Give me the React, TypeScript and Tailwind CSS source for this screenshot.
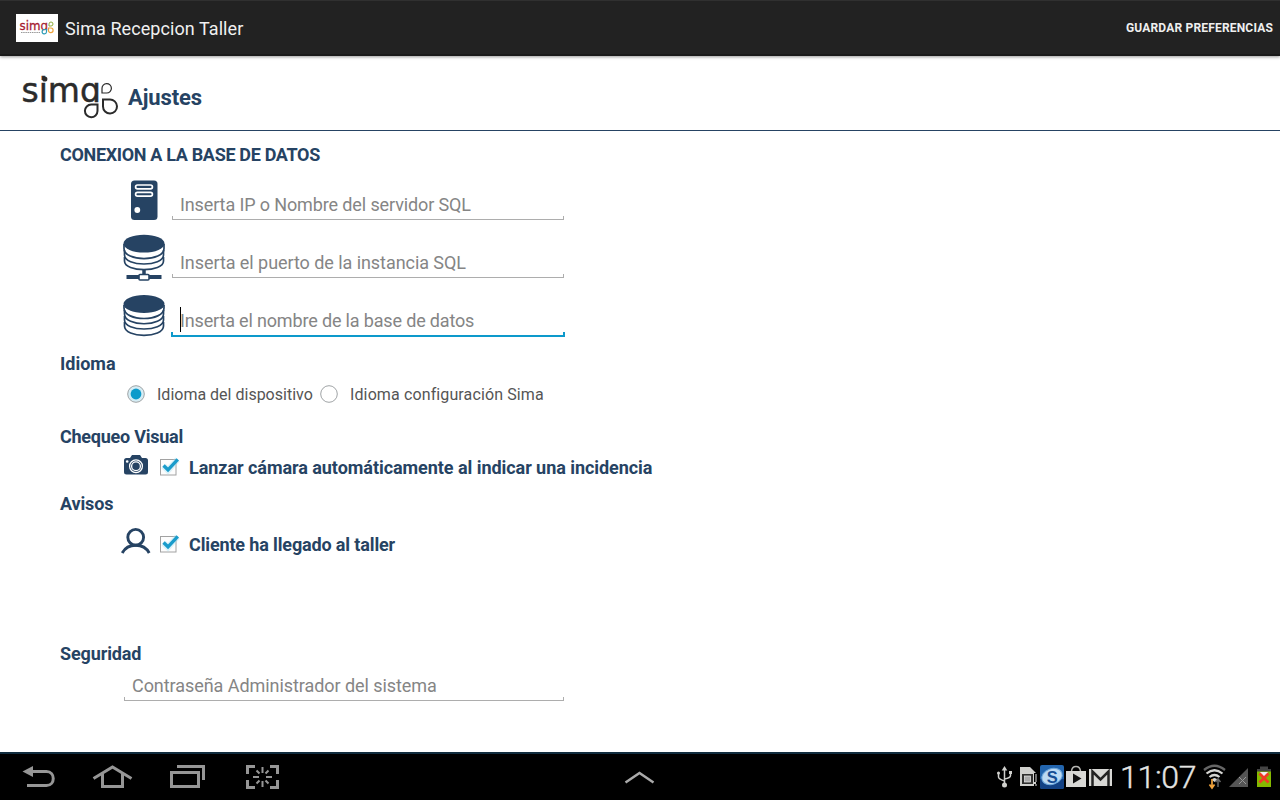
import React from "react";

type GlyphProps = {
  box: string;
  className: string;
  children: React.ReactNode;
};

function Glyph({ box, className, children }: GlyphProps) {
  return (
    <svg viewBox={box} className={`block shrink-0 ${className}`} fill="none">
      {children}
    </svg>
  );
}

const NAVY = "#264363";

function SimaLogo() {
  return (
    <Glyph box="20 64 100 55" className="h-[55px] w-[100px]">
      <text x="21.500" y="101.300" fontSize="34.500" textLength="79.500" lengthAdjust="spacingAndGlyphs" fill="#2b2b2b" stroke="#2b2b2b" strokeWidth=".5" className="font-['DejaVu_Sans']">
        simɑ
      </text>
      <circle cx="44.800" cy="78" r="2.600" fill="#2b2b2b" />
      <g stroke="#2b2b2b">
        <path d="M102 92V87.500A4.700 4.700 0 1 1 106.700 92Z" strokeWidth="1.200" />
        <path d="M103 98.500H109.700A7 7 0 1 1 103 105.500Z" strokeWidth="2" />
        <path d="M97.500 103.600V110A6.300 6.300 0 1 1 91.200 103.600Z" strokeWidth="2" />
      </g>
    </Glyph>
  );
}

function AppIcon() {
  return (
    <Glyph box="0 0 42 28" className="h-7 w-[42px] bg-white">
      <text x="3.500" y="15.500" fontSize="13" textLength="28.500" lengthAdjust="spacingAndGlyphs" fill="#a51c30" stroke="#a51c30" strokeWidth=".3" className="font-['DejaVu_Sans']">
        simɑ
      </text>
      <path d="M5 18.500H24" stroke="#999" strokeWidth="1.200" strokeDasharray="1.500 .7" />
      <path d="M33 12V10A2 2 0 1 1 35 12Z" stroke="#8fae3c" />
      <path d="M32.500 14H35A2.300 2.300 0 1 1 32.500 16.500Z" stroke="#eda23b" strokeWidth="1.200" />
      <path d="M30.500 15.500V18A2.200 2.200 0 1 1 28.300 15.500Z" stroke="#2c9bb5" strokeWidth="1.200" />
    </Glyph>
  );
}

function ServerIcon() {
  return (
    <Glyph box="122 178 44 42" className="h-[42px] w-11">
      <rect x="131" y="180.500" width="26.500" height="39.500" rx="3.500" fill={NAVY} />
      <rect x="135.600" y="185" width="16.800" height="3.800" rx="1.900" stroke="#fff" strokeWidth="1.700" />
      <rect x="135.600" y="192.300" width="16.800" height="3.800" rx="1.900" stroke="#fff" strokeWidth="1.700" />
      <circle cx="137.300" cy="210" r="2.900" fill="#fff" />
    </Glyph>
  );
}

function NetworkDatabaseIcon() {
  return (
    <Glyph box="122 233 44 49" className="-mb-1 h-[49px] w-11">
      <g stroke={NAVY} strokeWidth="1.700">
        <path d="M124 244V248.500C124 262 164 262 164 248.500V244" />
        <path d="M124.500 250V255C124.500 267 163.500 267 163.500 255V250" />
        <path d="M124.500 257V261C124.500 272.500 163.500 272.500 163.500 261V257" />
      </g>
      <ellipse cx="144" cy="243.600" rx="20.500" ry="8.900" fill={NAVY} />
      <path d="M144 269V275" stroke={NAVY} strokeWidth="3.500" />
      <path d="M126.500 277H161.500" stroke={NAVY} strokeWidth="3.800" />
      <rect x="139" y="274.500" width="10" height="5.500" rx="1" fill="#fff" stroke={NAVY} strokeWidth="1.600" />
    </Glyph>
  );
}

function DatabaseIcon() {
  return (
    <Glyph box="122 293 44 44" className="h-11 w-11">
      <g stroke={NAVY} strokeWidth="1.700">
        <path d="M124 305V308C124 322 164 322 164 308V305" />
        <path d="M124.500 310V314C124.500 327 163.500 327 163.500 314V310" />
        <path d="M124.500 316V320C124.500 332 163.500 332 163.500 320V316" />
        <path d="M124.500 322V326C124.500 338.500 163.500 338.500 163.500 326V322" />
      </g>
      <ellipse cx="144" cy="304" rx="20.500" ry="8.900" fill={NAVY} />
    </Glyph>
  );
}

function CameraIcon() {
  return (
    <Glyph box="123 454.500 26 24" className="h-6 w-[26px]">
      <path d="M126.500 457.500H130L132 454.500H140L142 457.500H145.500Q148 457.500 148 460V471.500Q148 474 145.500 474H126.500Q124 474 124 471.500V460Q124 457.500 126.500 457.500Z" fill={NAVY} />
      <circle cx="136" cy="465.700" r="6.400" stroke="#fff" strokeWidth="1.300" />
      <circle cx="136" cy="465.700" r="4.400" fill={NAVY} stroke="#fff" strokeWidth="1.300" />
      <circle cx="127.200" cy="461" r="1.300" fill="#fff" />
    </Glyph>
  );
}

function PersonIcon() {
  return (
    <Glyph box="120 527 32 28" className="h-7 w-8">
      <circle cx="135.700" cy="537.300" r="7.900" stroke={NAVY} strokeWidth="2.900" />
      <path d="M122.200 553C125 548 129.500 545.300 135.700 545.300S146.500 548 149.200 553" stroke={NAVY} strokeWidth="2.900" />
    </Glyph>
  );
}

function CheckMark() {
  return (
    <Glyph box="158 456 24 22" className="h-[22px] w-6">
      <rect x="160.500" y="459.500" width="15.500" height="15.500" fill="#fdfdfd" stroke="#a2a2a2" />
      <path d="M163.500 466L168 470.300L177.500 459.500" stroke="#a8e1f3" strokeOpacity=".4" strokeWidth="6" />
      <path d="M163.500 465.500L168 469.800L177.800 459.300" stroke="#1a9ccb" strokeWidth="3.300" />
    </Glyph>
  );
}

function Radio({ selected = false }: { selected?: boolean }) {
  return (
    <Glyph box="0 0 20 20" className="h-5 w-5">
      <circle cx="10" cy="10" r="8.300" fill={selected ? "#d5edf5" : "#fff"} stroke="#a0a4a6" strokeWidth="1" />
      {selected && <circle cx="10" cy="10" r="5.400" fill="#0d9bcb" />}
    </Glyph>
  );
}

type FieldProps = { label: string; className: string; focused?: boolean };

function Field({ label, className, focused = false }: FieldProps) {
  return (
    <div
      className={`relative flex items-center text-[18px] text-[#858585] ${className} ${focused ? "border-b-2 border-[#0d99cb] pt-0.5 pl-[9px]" : "border-b border-[#adadad] pl-2"}`}
    >
      {focused && <span className="absolute top-[3px] left-[9px] h-[25px] w-px bg-black" />}
      <span className="whitespace-nowrap">{label}</span>
      <span className={`absolute bottom-0 left-0 ${focused ? "h-[3px] w-0.5 bg-[#0d99cb]" : "h-[3px] w-px bg-[#adadad]"}`} />
      <span className={`absolute right-0 bottom-0 ${focused ? "h-[3px] w-0.5 bg-[#0d99cb]" : "h-[3px] w-px bg-[#adadad]"}`} />
    </div>
  );
}

function Heading({ children, className }: { children: React.ReactNode; className: string }) {
  return (
    <h2 className={`flex items-end pl-[60px] text-[18px] leading-6 font-bold whitespace-nowrap text-[#264363] ${className}`}>
      {children}
    </h2>
  );
}

function Settings() {
  return (
    <main className="flex h-[621px] flex-col">
      <Heading className="h-9 tracking-[-0.33px]">CONEXION A LA BASE DE DATOS</Heading>
      <div className="flex h-[53px] items-end pl-[122px]">
        <ServerIcon />
        <Field label="Inserta IP o Nombre del servidor SQL" className="ml-[6px] h-[31px] w-[392px] tracking-[-0.12px]" />
      </div>
      <div className="flex h-[58px] items-end pl-[122px]">
        <NetworkDatabaseIcon />
        <Field label="Inserta el puerto de la instancia SQL" className="ml-[6px] h-[31px] w-[392px] tracking-[-0.06px]" />
      </div>
      <div className="flex h-[59px] items-end pl-[122px]">
        <DatabaseIcon />
        <Field label="Inserta el nombre de la base de datos" className="ml-[5px] h-[33px] w-[394px] tracking-[-0.16px]" focused />
      </div>
      <Heading className="h-[39px]">Idioma</Heading>
      <div className="flex h-9 items-center pl-[126px] text-[16px] whitespace-nowrap text-[#555]">
        <Radio selected />
        <span className="mt-0.5 ml-[11px] w-[162px]">Idioma del dispositivo</span>
        <Radio />
        <span className="mt-0.5 ml-[11px] tracking-[0.12px]">Idioma configuración Sima</span>
      </div>
      <Heading className="h-[37px] tracking-[-0.25px]">Chequeo Visual</Heading>
      <div className="flex h-9 items-center pl-[123px] text-[18px] font-bold whitespace-nowrap text-[#264363]">
        <CameraIcon />
        <div className="ml-[9px]"><CheckMark /></div>
        <span className="ml-[7px] tracking-[-0.05px]">Lanzar cámara automáticamente al indicar una incidencia</span>
      </div>
      <Heading className="h-[31px] tracking-[-0.15px]">Avisos</Heading>
      <div className="mt-[7px] flex h-[42px] items-center pl-[120px] text-[18px] font-bold whitespace-nowrap text-[#264363]">
        <div className="mb-[6px]"><PersonIcon /></div>
        <div className="ml-[6px]"><CheckMark /></div>
        <span className="ml-[7px] tracking-[-0.14px]">Cliente ha llegado al taller</span>
      </div>
      <Heading className="h-[101px] tracking-[-0.12px]">Seguridad</Heading>
      <Field label="Contraseña Administrador del sistema" className="mt-1 ml-[124px] h-[31px] w-[440px] tracking-[-0.06px]" />
    </main>
  );
}

function NavigationBar() {
  return (
    <nav className="flex h-12 shrink-0 items-center border-t-2 border-[#102c3e] bg-black">
      <Glyph box="20 764 280 26" className="ml-5 h-[26px] w-[280px]">
        <g stroke="#969696" strokeWidth="3">
          <path d="M31 771.500H46.500C55.500 771.500 55.500 785.500 46.500 785.500H27" />
          <path d="M22.500 771.500L33 766V777Z" fill="#969696" stroke="none" />
          <path d="M93.500 778.500L112.500 767L131.500 778.500" />
          <path d="M102.500 774V786.500H122.500V774" />
          <rect x="171.500" y="772.500" width="27" height="14" />
          <path d="M177 766.500H203.500V780" />
          <path d="M255 766.500H247.500V774M270 766.500H277.500V774M255 787.500H247.500V780M270 787.500H277.500V780" />
        </g>
        <path d="M262.500 767V773M262.500 781V787M253 777H259M266 777H272M256.500 770.500L259.500 773.500M268.500 770.500L265.500 773.500M256.500 783.500L259.500 780.500M268.500 783.500L265.500 780.500" stroke="#969696" strokeWidth="2" />
      </Glyph>
      <Glyph box="624 768 32 16" className="ml-[324px] h-4 w-8">
        <path d="M625.500 781.500L639.500 772L653.500 781.500" stroke="#aaa" strokeWidth="2.500" />
      </Glyph>
      <Glyph box="996 764 118 26" className="ml-[340px] h-[26px] w-[118px]">
        <g stroke="#d0d0cd" strokeWidth="1.500">
          <path d="M1004.500 768V785M998.500 773V777Q998.500 779 1004.500 781M1010.500 773V775.500Q1010.500 778 1004.500 779" />
          <path d="M1001.700 770.500L1004.500 766L1007.300 770.500Z" fill="#d0d0cd" stroke="none" />
          <circle cx="1004.500" cy="785" r="2.500" fill="#d0d0cd" stroke="none" />
          <circle cx="998.500" cy="773" r="1.500" fill="#d0d0cd" stroke="none" />
          <rect x="1009" y="771" width="3" height="3" fill="#d0d0cd" stroke="none" />
        </g>
        <path d="M1020 767H1030L1036 773V786H1020Z" fill="#d0d0cd" />
        <rect x="1022" y="774" width="11" height="10" fill="#30302f" />
        <rect x="1024.500" y="776" width="6" height="6" fill="#aaa" stroke="#eee" strokeWidth=".7" />
        <path d="M1035 773V782M1035 784V786" stroke="#000" strokeWidth="2" />
        <path d="M1036 774V782M1036 784V786" stroke="#ddd" />
        <rect x="1040" y="765" width="24" height="24" rx="2" fill="#2365ad" />
        <path d="M1040 779H1064V787Q1064 789 1062 789H1042Q1040 789 1040 787Z" fill="#124184" />
        <ellipse cx="1052" cy="776.500" rx="10.500" ry="7.800" fill="#bddaf2" stroke="#6fa8dc" transform="rotate(-20 1052 776.500)" />
        <text x="1046.700" y="782.500" fontSize="16.500" fontWeight="bold" fill="#164e94" className="font-['Liberation_Sans']">S</text>
        <path d="M1066 771H1086V787H1066Z" fill="#d8d8d5" />
        <path d="M1071.500 771Q1072 766.500 1076 766.500T1080.500 771" stroke="#b4b4b1" strokeWidth="1.500" />
        <path d="M1073 773.500L1081.500 778.500L1073 783.500Z" fill="#111" />
        <rect x="1089" y="769" width="23" height="17" fill="#d8d8d5" />
        <path d="M1092.500 786V771.500L1100.500 779.500L1108.500 771.500V786" stroke="#222" strokeWidth="2.500" />
      </Glyph>
      <span className="ml-[6px] w-[80px] text-[32px] leading-none font-light tracking-[-0.3px] whitespace-nowrap text-[#e4e4e2] [-webkit-text-stroke:0.4px_#e4e4e2]">11:07</span>
      <Glyph box="1200 762 76 28" className="h-7 w-[76px]">
        <path d="M1204 769Q1214.500 760.500 1225 769" stroke="#666" strokeWidth="2.300" />
        <path d="M1206.500 772.500Q1214.500 766 1222.500 772.500M1209.500 776Q1214.500 772 1219.500 776" stroke="#d5d5d2" strokeWidth="2.200" />
        <path d="M1211.500 778.500Q1214.500 775.500 1217.500 778.500L1214.500 781Z" fill="#d5d5d2" />
        <path d="M1212 778V786M1209.500 783.500L1212 787L1214.500 783.500" stroke="#f2a43c" strokeWidth="1.700" />
        <path d="M1218 786V779M1215.500 781L1218 778L1220.500 781" stroke="#666" strokeWidth="1.500" />
        <path d="M1229 786H1248V767Z" fill="#555" />
        <path d="M1239 776L1246 783M1246 776L1239 783" stroke="#999" />
        <rect x="1260" y="765.500" width="8" height="3" fill="#444" />
        <rect x="1257" y="768" width="14" height="18" fill="#84b800" />
        <rect x="1257" y="768" width="14" height="2.500" fill="#444" />
        <path d="M1260 771H1268L1266 776H1262Z" fill="#eee" />
        <path d="M1259.500 772.500L1268.500 781.500M1268.500 772.500L1259.500 781.500" stroke="#ef3b24" strokeWidth="2.800" />
      </Glyph>
    </nav>
  );
}

export default function App() {
  return (
    <div className="flex h-[800px] w-[1280px] flex-col overflow-hidden bg-white font-['Roboto',sans-serif]">
      <header className="z-10 flex h-14 shrink-0 items-center border-t-1 border-b-2 border-t-[#303030] border-b-[#1a1a1a] bg-[#222] pr-[7px] pl-4 shadow-[0_1px_3px_rgba(0,0,0,0.4)]">
        <AppIcon />
        <h1 className="mt-0.5 ml-[7px] text-[18px] tracking-[0.07px] whitespace-nowrap text-[#f0f0f0]">Sima Recepcion Taller</h1>
        <span className="ml-auto text-[12px] font-bold tracking-[0.18px] whitespace-nowrap text-[#efefef]">GUARDAR PREFERENCIAS</span>
      </header>
      <section className="flex h-[75px] shrink-0 items-center border-b border-[#264363] pl-5">
        <div className="mt-[-1px]"><SimaLogo /></div>
        <span className="mt-2 ml-2 text-[22px] font-bold tracking-[-0.1px] text-[#264363]">Ajustes</span>
      </section>
      <Settings />
      <NavigationBar />
    </div>
  );
}
